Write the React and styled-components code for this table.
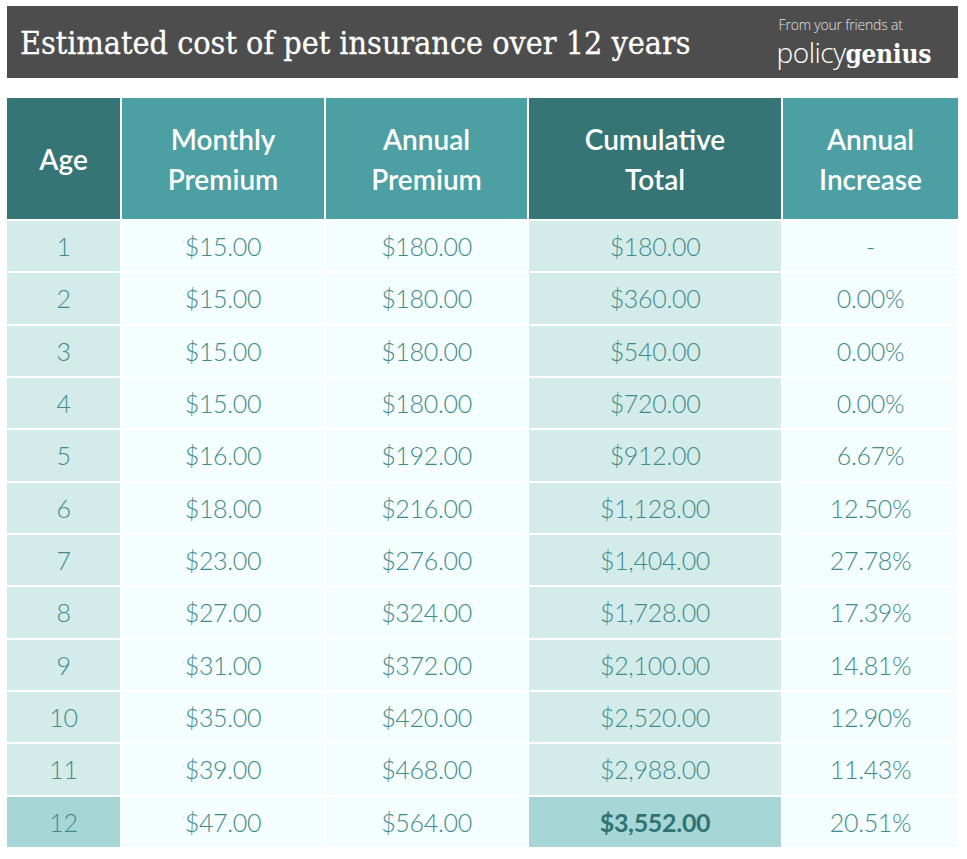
import React from "react";
import styled, { createGlobalStyle } from "styled-components";

const Global = createGlobalStyle`
  html, body { margin: 0; padding: 0; background: #ffffff; }
  body { font-family: "Lato", "Liberation Sans", sans-serif; }
`;

const Page = styled.div`
  width: 967px;
  padding: 6px 9px 0 7px;
  box-sizing: border-box;
  display: flex;
  flex-direction: column;
  gap: 20px;
`;

const TitleBar = styled.header`
  height: 72px;
  background: #4d4d4d;
  display: flex;
  align-items: center;
  justify-content: space-between;
  padding: 0 27px 0 13px;
  box-sizing: border-box;
`;

const Title = styled.h1`
  margin: 0;
  font-family: "DejaVu Serif Condensed", "DejaVu Serif", serif;
  font-weight: 400;
  font-size: 32px;
  color: #ffffff;
  letter-spacing: 0px;
  padding-top: 2px;
  -webkit-text-stroke: 0.3px #ffffff;
`;

const Brand = styled.div`
  display: flex;
  flex-direction: column;
  align-items: flex-start;
  gap: 5px;
`;

const Tagline = styled.span`
  display: block;
  font-family: "Open Sans", "Liberation Sans", sans-serif;
  font-weight: 300;
  font-size: 14px;
  line-height: 16px;
  color: #e2e2e2;
  margin-left: 2px;
  letter-spacing: -0.2px;
`;

const Logo = styled.span`
  display: block;
  font-size: 28px;
  color: #ffffff;
  line-height: 28px;
  white-space: nowrap;
`;

const LogoLight = styled.span`
  font-family: "Open Sans", "Liberation Sans", sans-serif;
  font-weight: 300;
  letter-spacing: -0.5px;
`;

const LogoBold = styled.span`
  font-family: "DejaVu Serif Condensed", "DejaVu Serif", serif;
  font-weight: 700;
  font-size: 26px;
  letter-spacing: -0.3px;
`;

const Table = styled.div`
  display: grid;
  grid-template-columns: 113px 202px 201px 252px 175px;
  grid-template-rows: 121px repeat(12, 50.33px);
  gap: 2px;
  background: #ffffff;
`;

const HeadCell = styled.div`
  background: ${(p) => (p.$dark ? "#367575" : "#4c9fa2")};
  color: #ffffff;
  display: flex;
  align-items: center;
  justify-content: center;
  text-align: center;
  font-family: "Lato", "Liberation Sans", sans-serif;
  font-weight: 600;
  font-size: 28px;
  line-height: 40px;
  padding-top: 1px;
`;

const Cell = styled.div`
  background: ${(p) =>
    p.$tone === "hi" ? "#a7d6d7" : p.$tone === "mid" ? "#d3ecea" : "#f5fefe"};
  color: ${(p) => (p.$bold ? "#2f7373" : "#3f8a8b")};
  display: flex;
  align-items: center;
  justify-content: center;
  font-family: "Lato", "Liberation Sans", sans-serif;
  font-weight: ${(p) => (p.$bold ? 700 : 300)};
  font-size: 25px;
  letter-spacing: -0.3px;
`;

const heads = [
  { label: ["Age"], dark: true },
  { label: ["Monthly", "Premium"] },
  { label: ["Annual", "Premium"] },
  { label: ["Cumulative", "Total"], dark: true },
  { label: ["Annual", "Increase"] },
];

const rows = [
  ["1", "$15.00", "$180.00", "$180.00", "-"],
  ["2", "$15.00", "$180.00", "$360.00", "0.00%"],
  ["3", "$15.00", "$180.00", "$540.00", "0.00%"],
  ["4", "$15.00", "$180.00", "$720.00", "0.00%"],
  ["5", "$16.00", "$192.00", "$912.00", "6.67%"],
  ["6", "$18.00", "$216.00", "$1,128.00", "12.50%"],
  ["7", "$23.00", "$276.00", "$1,404.00", "27.78%"],
  ["8", "$27.00", "$324.00", "$1,728.00", "17.39%"],
  ["9", "$31.00", "$372.00", "$2,100.00", "14.81%"],
  ["10", "$35.00", "$420.00", "$2,520.00", "12.90%"],
  ["11", "$39.00", "$468.00", "$2,988.00", "11.43%"],
  ["12", "$47.00", "$564.00", "$3,552.00", "20.51%"],
];

export default function App() {
  return (
    <>
      <Global />
      <Page>
        <TitleBar>
          <Title>Estimated cost of pet insurance over 12 years</Title>
          <Brand>
            <Tagline>From your friends at</Tagline>
            <Logo>
              <LogoLight>policy</LogoLight>
              <LogoBold>genius</LogoBold>
            </Logo>
          </Brand>
        </TitleBar>
        <Table>
          {heads.map((h, i) => (
            <HeadCell key={i} $dark={h.dark}>
              <div>
                {h.label.map((l, j) => (
                  <div key={j}>{l}</div>
                ))}
              </div>
            </HeadCell>
          ))}
          {rows.map((r, ri) => {
            const last = ri === rows.length - 1;
            return r.map((v, ci) => {
              const shaded = ci === 0 || ci === 3;
              const tone = shaded ? (last ? "hi" : "mid") : "light";
              return (
                <Cell key={`${ri}-${ci}`} $tone={tone} $bold={last && ci === 3}>
                  {v}
                </Cell>
              );
            });
          })}
        </Table>
      </Page>
    </>
  );
}
